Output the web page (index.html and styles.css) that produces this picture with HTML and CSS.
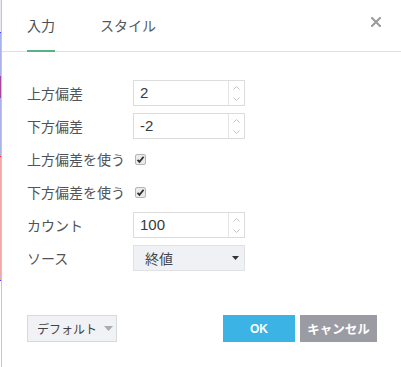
FILE: index.html
```html
<!DOCTYPE html>
<html lang="ja">
<head>
<meta charset="utf-8">
<link rel="stylesheet" href="styles.css">
</head>
<body>
<div class="page">
  <div class="edge">
    <span class="seg s-white-top"></span>
    <span class="seg s-blue-dot"></span>
    <span class="seg s-lblue1"></span>
    <span class="seg s-magenta"></span>
    <span class="seg s-lblue2"></span>
    <span class="seg s-red-dot"></span>
    <span class="seg s-pink"></span>
    <span class="seg s-blue-dot"></span>
  </div>
  <div class="dialog">
    <div class="header">
      <div class="tabs">
        <div class="tab active">入力</div>
        <div class="tab">スタイル</div>
      </div>
      <svg class="close" width="10" height="10" viewBox="0 0 10 10"><path d="M1 1L9 9M9 1L1 9" stroke="#9a9a9a" stroke-width="2" stroke-linecap="square"/></svg>
    </div>
    <div class="form">
      <div class="row">
        <span class="label">上方偏差</span>
        <div class="num"><span class="val">2</span><span class="spin"><svg width="7" height="4" viewBox="0 0 7 4"><path d="M0.5 3.5L3.5 0.5L6.5 3.5" fill="none" stroke="#c3c3c3"/></svg><svg width="7" height="4" viewBox="0 0 7 4"><path d="M0.5 0.5L3.5 3.5L6.5 0.5" fill="none" stroke="#c3c3c3"/></svg></span></div>
      </div>
      <div class="row">
        <span class="label">下方偏差</span>
        <div class="num"><span class="val">-2</span><span class="spin"><svg width="7" height="4" viewBox="0 0 7 4"><path d="M0.5 3.5L3.5 0.5L6.5 3.5" fill="none" stroke="#c3c3c3"/></svg><svg width="7" height="4" viewBox="0 0 7 4"><path d="M0.5 0.5L3.5 3.5L6.5 0.5" fill="none" stroke="#c3c3c3"/></svg></span></div>
      </div>
      <div class="row check-row">
        <span class="label-auto">上方偏差を使う</span>
        <svg class="cb" width="11" height="11" viewBox="0 0 11 11"><rect x="0.5" y="0.5" width="10" height="10" rx="1.5" fill="#ebebeb" stroke="#b5b5b5"/><path d="M2.5 5.8L4.5 7.8L8.6 2.8" fill="none" stroke="#2f2f2f" stroke-width="1.8"/></svg>
      </div>
      <div class="row check-row">
        <span class="label-auto">下方偏差を使う</span>
        <svg class="cb" width="11" height="11" viewBox="0 0 11 11"><rect x="0.5" y="0.5" width="10" height="10" rx="1.5" fill="#ebebeb" stroke="#b5b5b5"/><path d="M2.5 5.8L4.5 7.8L8.6 2.8" fill="none" stroke="#2f2f2f" stroke-width="1.8"/></svg>
      </div>
      <div class="row">
        <span class="label">カウント</span>
        <div class="num"><span class="val">100</span><span class="spin"><svg width="7" height="4" viewBox="0 0 7 4"><path d="M0.5 3.5L3.5 0.5L6.5 3.5" fill="none" stroke="#c3c3c3"/></svg><svg width="7" height="4" viewBox="0 0 7 4"><path d="M0.5 0.5L3.5 3.5L6.5 0.5" fill="none" stroke="#c3c3c3"/></svg></span></div>
      </div>
      <div class="row">
        <span class="label">ソース</span>
        <div class="select"><span class="sel-val">終値</span><svg width="7" height="4" viewBox="0 0 7 4"><path d="M0 0H7L3.5 4Z" fill="#333"/></svg></div>
      </div>
    </div>
    <div class="footer">
      <button class="btn-default">デフォルト<svg width="9" height="5" viewBox="0 0 9 5"><path d="M0 0H9L4.5 5Z" fill="#a9abb0"/></svg></button>
      <div class="actions">
        <button class="btn ok">OK</button>
        <button class="btn cancel">キャンセル</button>
      </div>
    </div>
  </div>
</div>
</body>
</html>
```

FILE: styles.css
```css
html, body {
  margin: 0;
  padding: 0;
  background: #fff;
}
body {
  font-family: "Noto Sans CJK JP", "Liberation Sans", sans-serif;
  color: #4a4d52;
}
.page {
  display: flex;
  width: 401px;
  height: 367px;
  overflow: hidden;
}
.edge {
  width: 1px;
  display: flex;
  flex-direction: column;
  flex: none;
}
.seg { display: block; width: 1px; }
.s-white-top { height: 32px; background: #e8e8ee; }
.s-blue-dot { height: 1px; background: #3b45ff; }
.s-lblue1 { height: 43px; background: #aab0ea; }
.s-magenta { height: 22px; background: #a8469a; }
.s-lblue2 { height: 58px; background: #aab0ea; }
.s-red-dot { height: 1px; background: #ff2a2a; }
.s-pink { height: 123px; background: #f2a9ab; }
.dialog {
  flex: 1;
  border-left: 1px solid #c6c6c6;
  display: flex;
  flex-direction: column;
}
.header {
  height: 51px;
  border-bottom: 1px solid #e0e0e0;
  display: flex;
  justify-content: space-between;
  padding: 0 20px 0 25px;
}
.tabs {
  display: flex;
  gap: 45px;
}
.tab {
  font-size: 14px;
  line-height: 20px;
  padding: 15px 0;
  height: 20px;
  border-bottom: 2px solid transparent;
  color: #555960;
}
.tab.active {
  border-bottom-color: #55b386;
  color: #4a4e55;
}
.close {
  margin-top: 17px;
}
.form {
  display: flex;
  flex-direction: column;
  gap: 7px;
  padding: 28px 0 0 25px;
}
.row {
  display: flex;
  align-items: center;
  height: 26px;
  font-size: 14px;
}
.label {
  width: 106px;
  color: #505358;
}
.label-auto {
  margin-right: 8px;
  color: #505358;
}
.check-row .cb {
  margin-left: 2px;
}
.num {
  width: 110px;
  height: 24px;
  border: 1px solid #dcdcdc;
  display: flex;
}
.val {
  flex: 1;
  padding-left: 6px;
  line-height: 24px;
  font-family: "Liberation Sans", "Noto Sans CJK JP", sans-serif;
  font-size: 15px;
  color: #3a3a3a;
}
.spin {
  width: 15px;
  border-left: 1px solid #e4e4e4;
  display: flex;
  flex-direction: column;
  align-items: center;
  justify-content: space-between;
  padding: 5px 0 4px;
}
.select {
  width: 94px;
  height: 24px;
  border: 1px solid #dfe1e5;
  background: #f0f1f5;
  display: flex;
  align-items: center;
  justify-content: space-between;
  padding: 0 5px 0 11px;
}
.sel-val {
  color: #44474d;
  font-size: 14px;
}
.footer {
  margin-top: auto;
  display: flex;
  justify-content: space-between;
  align-items: center;
  padding: 0 24px 25px 25px;
}
button {
  font-family: "Noto Sans CJK JP", "Liberation Sans", sans-serif;
  margin: 0;
  cursor: pointer;
}
.btn-default {
  width: 90px;
  height: 27px;
  background: #f1f2f5;
  border: 1px solid #d8d9dd;
  color: #404348;
  font-size: 12px;
  display: flex;
  align-items: center;
  gap: 7px;
  padding: 0 0 0 9px;
  white-space: nowrap;
}
.actions {
  display: flex;
  gap: 5px;
}
.btn {
  height: 27px;
  border: none;
  color: #fff;
  font-weight: bold;
  font-size: 12.5px;
  padding: 0;
  white-space: nowrap;
}
.ok {
  width: 72px;
  background: #3bb3e4;
  font-family: "Liberation Sans", sans-serif;
  font-size: 12px;
}
.cancel {
  width: 77px;
  background: #9b9ca3;
}
```
